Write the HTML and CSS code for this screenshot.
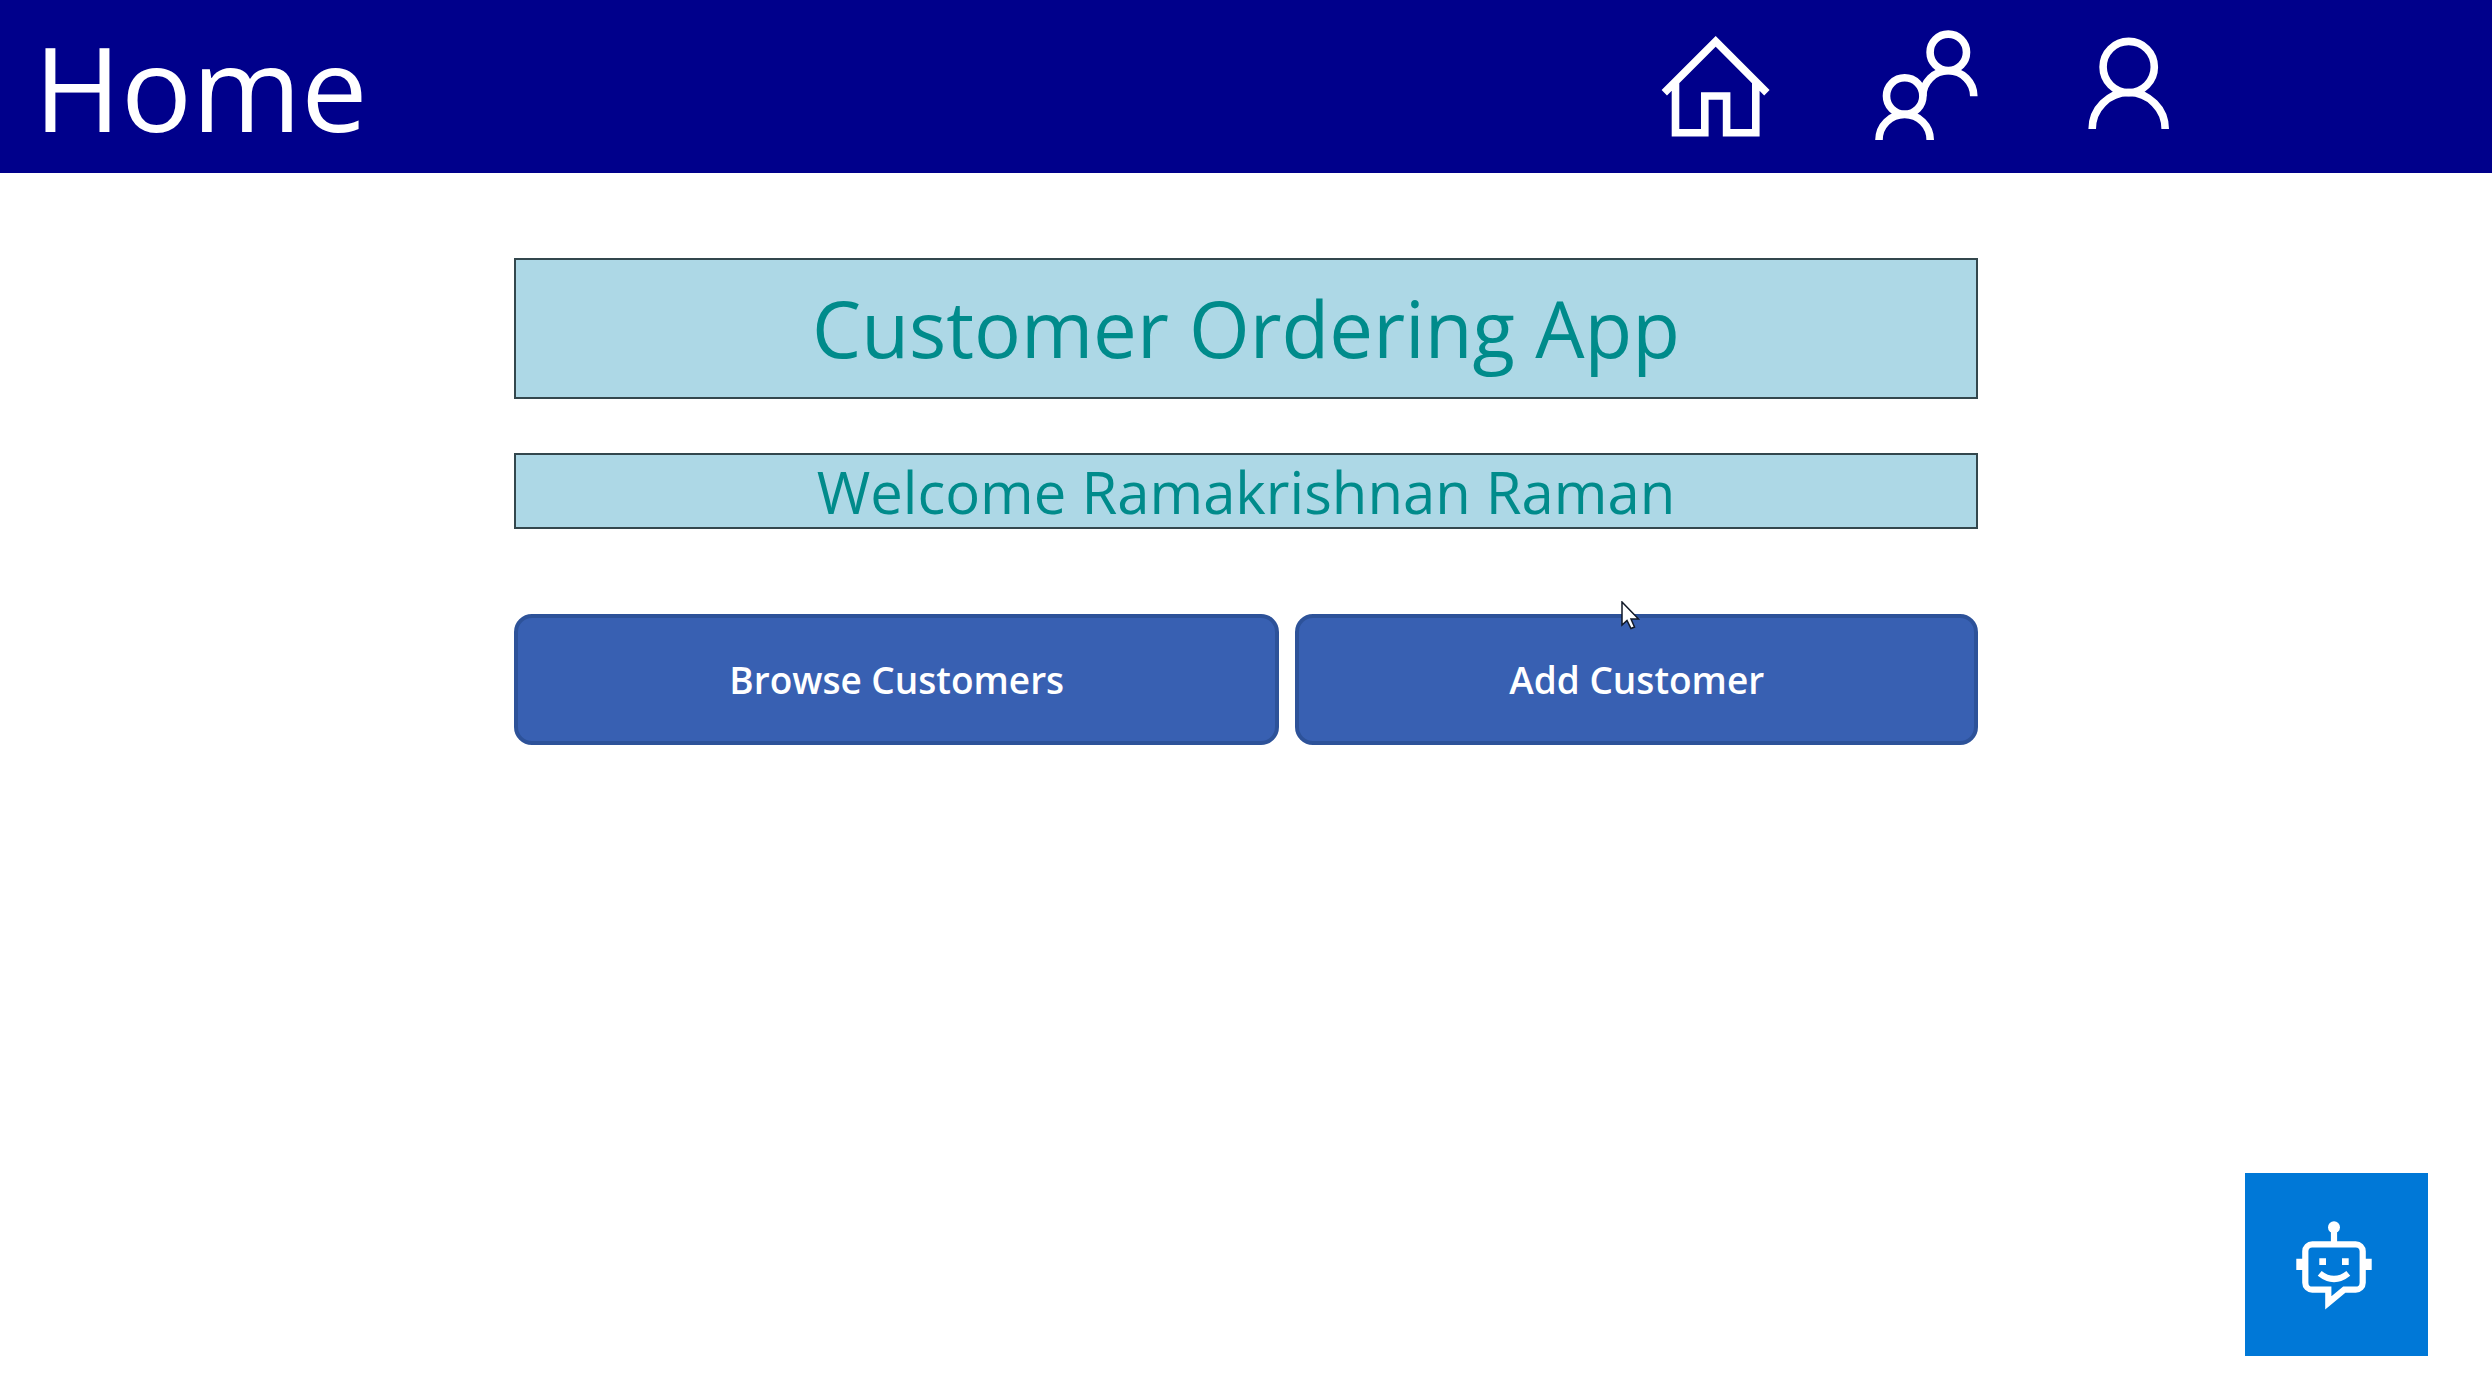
FILE: index.html
```html
<!DOCTYPE html>
<html lang="en">
<head>
  <meta charset="utf-8">
  <meta name="viewport" content="width=device-width, initial-scale=1">
  <title>Home</title>
  <link rel="stylesheet" href="styles.css">
</head>
<body>
  <header class="topbar">
    <h1 class="topbar-title">Home</h1>
    <nav class="topbar-nav" aria-label="Main">
      <button class="icon-button" type="button" aria-label="Home">
        <svg class="icon" viewBox="0 0 120 120" aria-hidden="true">
          <path d="M8.3 66.7L59.7 15.3L110.9 66.7M19.5 56V106.8H48.8V70H70.6V106.8H99.8V56"/>
        </svg>
      </button>
      <button class="icon-button" type="button" aria-label="Customers">
        <svg class="icon" viewBox="0 0 120 120" aria-hidden="true">
          <circle cx="82.3" cy="26.3" r="18.2"/>
          <path d="M56.8 70.3A25.5 25.5 0 0 1 107.8 70.3"/>
          <circle cx="38.7" cy="70" r="18.2"/>
          <path d="M13 114A25.6 25.6 0 0 1 64.2 114"/>
        </svg>
      </button>
      <button class="icon-button" type="button" aria-label="Profile">
        <svg class="icon" viewBox="0 0 120 120" aria-hidden="true">
          <circle cx="52.7" cy="41" r="25.6"/>
          <path d="M16.2 103A36.5 36.5 0 0 1 89.2 103"/>
        </svg>
      </button>
    </nav>
  </header>

  <main class="content">
    <h2 class="banner banner-large">Customer Ordering App</h2>
    <p class="banner banner-small">Welcome Ramakrishnan Raman</p>
    <div class="actions">
      <button class="action" type="button">Browse Customers</button>
      <button class="action" type="button">Add Customer</button>
      <svg class="cursor" viewBox="0 0 19 29" aria-hidden="true">
        <path d="M1 1V24L6 19.500L10 27.500L13.500 26L10 18H17.500Z"/>
      </svg>
    </div>
  </main>

  <button class="bot" type="button" aria-label="Open chat bot">
    <svg class="bot-icon" viewBox="0 0 183 183" aria-hidden="true">
      <circle class="solid" cx="89" cy="54.300" r="6"/>
      <path d="M89 54V71"/>
      <path d="M83.300 130V116.700H67.300A7 7 0 0 1 60.300 109.700V78.300A7 7 0 0 1 67.300 71.300H110.700A7 7 0 0 1 117.700 78.300V109.700A7 7 0 0 1 110.700 116.700H99.300L83.300 130Z"/>
      <path class="solid" d="M51.300 85.700H58V97H51.300ZM120 85.700H126.700V97H120ZM74.300 85.300H81V92H74.300ZM97 85.300H103.700V92H97Z"/>
      <path d="M74.700 100.300Q89 111.700 103.300 100.300"/>
    </svg>
  </button>
</body>
</html>
```
FILE: styles.css
```css
* {
  box-sizing: border-box;
}

body {
  margin: 0;
  background: #fff;
  font-family: "Open Sans", "Noto Sans", sans-serif;
}

h1,
h2,
p {
  margin: 0;
  font-weight: 400;
}

button {
  border: 0;
  padding: 0;
  font: inherit;
  color: inherit;
  cursor: pointer;
}

.topbar {
  display: flex;
  align-items: flex-start;
  justify-content: space-between;
  padding: 26px 296px 25px 34px;
  background: #00008b;
  color: #fff;
}

.topbar-title {
  font-size: 118px;
  line-height: 122px;
}

.topbar-nav {
  display: flex;
  gap: 90px;
}

.icon-button {
  background: none;
}

.icon {
  display: block;
  width: 120px;
  height: 120px;
  fill: none;
  stroke: #fff;
  stroke-width: 7.6;
}

.content {
  width: 58.75%;
  margin: 0 auto;
  padding-top: 85px;
}

.banner {
  border: 2px solid #33474d;
  background: #add8e6;
  color: #008b8b;
  text-align: center;
}

.banner-large {
  margin-bottom: 54px;
  padding: 13px 0;
  font-size: 78px;
  line-height: 111px;
}

.banner-small {
  margin-bottom: 85px;
  padding-top: 2px;
  font-size: 58px;
  line-height: 70px;
}

.actions {
  position: relative;
  display: grid;
  grid-template-columns: 766fr 683fr;
  gap: 16px;
}

.action {
  padding: 37px 16px;
  border: 4px solid #2d5299;
  border-radius: 18px;
  background: #3860b2;
  color: #fff;
  font-size: 37px;
  font-weight: 600;
  line-height: 49px;
}

.cursor {
  position: absolute;
  top: -13px;
  left: 1107px;
  width: 19px;
  height: 29px;
  fill: #fff;
  stroke: #101828;
  stroke-width: 1.5;
}

.bot {
  position: fixed;
  right: 64px;
  bottom: 44px;
  background: #0078d7;
}

.bot-icon {
  display: block;
  width: 183px;
  height: 183px;
  fill: none;
  stroke: #fff;
  stroke-width: 6.2;
}

.solid {
  fill: #fff;
  stroke: none;
}
```
